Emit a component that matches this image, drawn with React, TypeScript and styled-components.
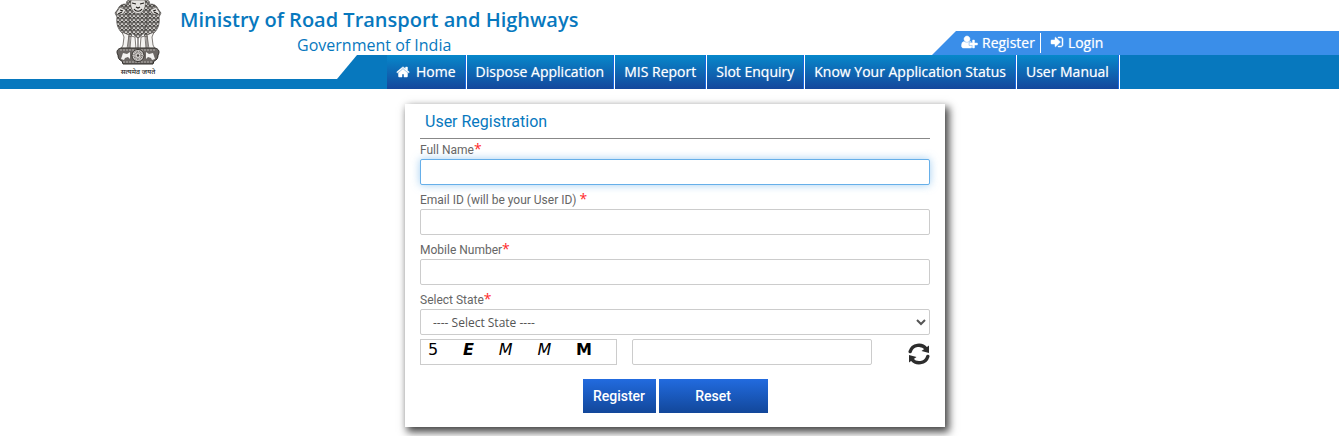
import React from 'react';
import styled, { createGlobalStyle } from 'styled-components';

const GlobalStyle = createGlobalStyle`
  *, *::before, *::after { box-sizing: border-box; }
  body { margin: 0; background: #fff; font-family: 'Open Sans', 'Noto Sans', sans-serif; }
`;

const blue = '#0778be';

const Header = styled.header`
  display: grid;
  grid-template-columns: 337px minmax(0, 1fr);
  grid-template-rows: 55px 24px 10px;
`;

const EmblemLink = styled.a`
  grid-area: 1 / 1 / 3 / 2;
  justify-self: start;
  margin-left: 114px;
  height: 77px;
`;

const Brand = styled.div`
  grid-area: 1 / 1 / 2 / 3;
  justify-self: start;
  margin-left: 180px;
  padding-top: 5px;
  color: ${blue};
`;

const BrandTitle = styled.h1`
  margin: 0;
  font-size: 20px;
  font-weight: 600;
  line-height: 30px;
`;

const BrandSubtitle = styled.p`
  margin: 0;
  padding-right: 10px;
  font-size: 16px;
  line-height: 20px;
  text-align: center;
`;

const Strip = styled.div`
  grid-area: 3 / 1 / 4 / 2;
  background: ${blue};
`;

const AccountBar = styled.nav`
  grid-area: 1 / 2 / 2 / 3;
  align-self: end;
  display: flex;
  align-items: center;
  height: 24px;
  margin-left: 595px;
  padding-left: 24px;
  background: #3a8ee9;
  clip-path: polygon(24px 0, 100% 0, 100% 100%, 0 100%);
`;

const AccountLink = styled.a<{ $divided?: boolean }>`
  display: flex;
  align-items: center;
  gap: 4px;
  height: 20px;
  padding: 0 5px 2px;
  padding-left: ${p => (p.$divided ? 9 : 5)}px;
  border-left: ${p => (p.$divided ? '1px solid #fff' : '0')};
  color: #fff;
  font-size: 14px;
  font-weight: 500;
  text-decoration: none;
  text-shadow: 0 0 1px rgba(255, 255, 255, 0.6);
  white-space: nowrap;
`;

const MainNav = styled.nav`
  grid-area: 2 / 2 / 4 / 3;
  padding-left: 50px;
  background: ${blue};
  clip-path: polygon(20px 0, 100% 0, 100% 100%, 0 100%, 0 24px);
`;

const NavList = styled.ul`
  display: flex;
  height: 34px;
  margin: 0;
  padding: 0;
  list-style: none;
`;

const NavLink = styled.a`
  display: flex;
  align-items: center;
  gap: 6px;
  height: 34px;
  padding: 0 10px 1px 9px;
  border-right: 1px solid #fff;
  background: linear-gradient(#0788cb, #15479c);
  box-shadow: inset -1px 0 #1668e0;
  color: #fff;
  font-size: 14px;
  font-weight: 500;
  text-decoration: none;
  text-shadow: 0 0 1px rgba(255, 255, 255, 0.6);
  white-space: nowrap;
`;

const Main = styled.main`
  display: flex;
  justify-content: center;
  padding: 15px 0 9px 11px;
`;

const Card = styled.form`
  width: 540px;
  max-width: 100%;
  padding: 0 15px 14px;
  background: #fff;
  box-shadow: 3px 4px 8px 1px #444;
  color: #666;
  font-family: Roboto, sans-serif;
`;

const CardTitle = styled.h2`
  margin: 0;
  padding: 2px 0 0 5px;
  border-bottom: 1px solid #888;
  color: ${blue};
  font-size: 16px;
  font-weight: 400;
  line-height: 32px;
`;

const Field = styled.div`
  margin-bottom: 4px;
`;

const Label = styled.label`
  display: block;
  height: 20px;
  font-size: 12px;
  line-height: 22px;
`;

const Required = styled.span`
  color: #ff2a2a;
  font-family: 'Open Sans', sans-serif;
  font-size: 14px;
  line-height: 16px;
`;

const TextInput = styled.input`
  display: block;
  width: 100%;
  height: 26px;
  padding: 0 12px;
  border: 1px solid #ccc;
  border-radius: 2px;
  outline: 0;
  background: #fff;
  color: #555;
  font: 12px 'Open Sans', sans-serif;

  &:focus {
    border-color: #66afe9;
    box-shadow: 0 0 8px rgba(102, 175, 233, 0.6);
  }
`;

const StateSelect = styled.select`
  display: block;
  width: 100%;
  height: 26px;
  padding: 0 8px;
  border: 1px solid #ccc;
  border-radius: 2px;
  background: #fff;
  color: #555;
  font: 12px 'Open Sans', sans-serif;
`;

const CaptchaRow = styled.div`
  display: flex;
  gap: 15px;
`;

const Captcha = styled.div`
  display: flex;
  flex: 0 1 197px;
  justify-content: space-between;
  height: 26px;
  padding: 0 24px 0 7px;
  border: 1px solid #ccc;
  color: #000;
  font-family: 'DejaVu Sans', sans-serif;
  font-size: 16px;
  line-height: 20px;
`;

const Glyph = styled.span<{ $bold?: boolean; $italic?: boolean }>`
  font-weight: ${p => (p.$bold ? 700 : 400)};
  font-style: ${p => (p.$italic ? 'italic' : 'normal')};
`;

const CaptchaAnswer = styled(TextInput)`
  flex: 0 1 240px;
  width: 240px;
`;

const RefreshButton = styled.button`
  display: flex;
  margin-left: auto;
  padding: 4px 0 0;
  border: 0;
  background: none;
  color: #2d2d2d;
`;

const Actions = styled.div`
  display: flex;
  justify-content: center;
  gap: 3px;
  padding-top: 14px;
`;

const ActionButton = styled.button<{ $wide?: boolean }>`
  width: ${p => (p.$wide ? 109 : 73)}px;
  height: 34px;
  padding: 0;
  border: 0;
  background: linear-gradient(#226bdf, #12479a);
  color: #fff;
  font: 500 14px Roboto, sans-serif;
`;

const HomeIcon = () => (
  <svg width="14" height="14" viewBox="0 0 1792 1792" fill="currentColor" stroke="currentColor" strokeWidth="60" aria-hidden="true">
    <path d="M1472 992v480q0 26-19 45t-45 19h-384v-384h-256v384h-384q-26 0-45-19t-19-45v-480q0-1 .5-3t.5-3l575-474 575 474q1 2 1 6zm223-69l-62 74q-8 9-21 11h-3q-13 0-21-7l-692-577-692 577q-12 8-24 7-13-2-21-11l-62-74q-8-10-7-23.5t11-21.5l719-599q32-26 76-26t76 26l244 204v-195q0-14 9-23t23-9h192q14 0 23 9t9 23v408l219 182q10 8 11 21.5t-7 23.5z" />
  </svg>
);

const UserPlusIcon = () => (
  <svg width="17" height="14" viewBox="0 0 2048 1792" fill="currentColor" stroke="currentColor" strokeWidth="60" aria-hidden="true">
    <path d="M704 896q-159 0-271.5-112.5t-112.5-271.5 112.5-271.5 271.5-112.5 271.5 112.5 112.5 271.5-112.5 271.5-271.5 112.5zm960 128h352q13 0 22.5 9.5t9.5 22.5v192q0 13-9.5 22.5t-22.5 9.5h-352v352q0 13-9.5 22.5t-22.5 9.5h-192q-13 0-22.5-9.5t-9.5-22.5v-352h-352q-13 0-22.5-9.5t-9.5-22.5v-192q0-13 9.5-22.5t22.5-9.5h352v-352q0-13 9.5-22.5t22.5-9.5h192q13 0 22.5 9.5t9.5 22.5v352zm-736 224q0 52 38 90t90 38h256v238q-68 50-171 50h-874q-121 0-194-69t-73-190q0-53 3.5-103.5t14-109 26.5-108.5 43-97.5 62-81 85.5-53.5 111.5-20q19 0 39 17 79 61 154.5 91.5t164.5 30.5 164.5-30.5 154.5-91.5q20-17 39-17 132 0 217 96h-223q-52 0-90 38t-38 90v192z" />
  </svg>
);

const SignInIcon = () => (
  <svg width="14" height="14" viewBox="0 0 1792 1792" fill="currentColor" stroke="currentColor" strokeWidth="60" aria-hidden="true">
    <path d="M1312 896q0 26-19 45l-544 544q-19 19-45 19t-45-19-19-45v-288h-448q-26 0-45-19t-19-45v-384q0-26 19-45t45-19h448v-288q0-26 19-45t45-19 45 19l544 544q19 19 19 45zm352-352v704q0 119-84.5 203.5t-203.5 84.5h-320q-13 0-22.5-9.5t-9.5-22.5q0-4-1-20t-.5-26.5 3-23.5 10-19.5 20.5-6.5h320q66 0 113-47t47-113v-704q0-66-47-113t-113-47h-312l-11.5-1-11.5-3-8-5.5-7-9-2-13.5q0-4-1-20t-.5-26.5 3-23.5 10-19.5 20.5-6.5h320q119 0 203.5 84.5t84.5 203.5z" />
  </svg>
);

const RefreshIcon = () => (
  <svg width="22" height="22" viewBox="0 0 22 22" fill="none" stroke="currentColor" strokeWidth="3.4" strokeLinecap="round" aria-hidden="true">
    <path d="M2.200 8.500C4.500 1 14 .5 18 5.500M19.800 13.500C17.500 21 8 21.500 4 16.500" />
    <path d="M21 2.500V10L13.500 8zM1 19.500V12L8.500 14z" fill="currentColor" stroke="none" />
  </svg>
);

const Emblem = () => (
  <svg width="48" height="77" viewBox="0 0 48 77" role="img" aria-label="State Emblem of India">
    <defs>
      <pattern id="fur" width="4" height="4" patternUnits="userSpaceOnUse">
        <rect width="4" height="4" fill="#6d6a67" />
        <path d="M0 0l2 2.500L4 0M-2 2l2 2.500L2 2M2 2l2 2.500L6 2" fill="none" stroke="#d6d3d0" strokeWidth="1" />
        <path d="M0 1l2 2.500L4 1" fill="none" stroke="#2a2826" strokeWidth=".8" />
      </pattern>
    </defs>
    <g fill="url(#fur)" stroke="#4b4845" strokeWidth=".7">
      <path d="M15 6C11 2 5 5 4 9L1 13l2 4c-1 7 1 12 5 16l9 4 7-20z" />
      <path d="M33 6c4-4 10-1 11 3l3 4-2 4c1 7-1 12-5 16l-9 4-7-20z" />
      <path d="M13 1c-2 7-1 11 2 14 0 9 2 20 9 23 7-3 9-14 9-23 3-3 4-7 2-14-6-2-16-2-22 0z" />
    </g>
    <g fill="#e4e2df" stroke="#4b4845" strokeWidth=".6">
      <path d="M17 0c-1 5 0 9 3 12 2 2 6 2 8 0 3-3 4-7 3-12z" />
      <path d="M6 7l-4 6 2 2 5-1 3-4zM42 7l4 6-2 2-5-1-3-4z" />
    </g>
    <g fill="none" stroke="#24211e" strokeWidth="1.200">
      <path d="M18 3l4 1M30 3l-4 1M22 7l2 1 2-1M20 9c2 3 6 3 8 0M6 10l3 1M42 10l-3 1M4 14l4-2M44 14l-4-2" />
    </g>
    <g fill="#f3f2f0" stroke="#5f5b57" strokeWidth=".8">
      <path d="M8 32l2 5-1 8-2 4h6l2-14zM17 36l-1 13h6l-1-12zM27 37l-1 12h6l-1-13zM40 32l-2 5 1 8 2 4h-6l-2-14z" />
    </g>
    <path d="M15 36v12M24 38v11M33 36v12" stroke="#6d6966" strokeWidth="1.300" />
    <path d="M7 48h34c4 1 5 4 3 7 0 3-1 5-4 6l-1 3H9l-1-3c-3-1-4-3-4-6-2-3-1-6 3-7z" fill="#6b6764" stroke="#2d2a27" />
    <path d="M6 50h36M9 62h30" stroke="#c9c5c1" strokeWidth=".8" strokeDasharray="2 1" />
    <circle cx="24" cy="55.500" r="6" fill="#dcd9d6" stroke="#33302c" />
    <circle cx="24" cy="55.500" r="3.500" fill="none" stroke="#6d6966" strokeWidth="2.500" strokeDasharray=".7 .7" />
    <circle cx="24" cy="55.500" r="1.200" fill="#44413e" />
    <path d="M7 59l2-6 4 1 3-2v7l-2-2-3 1-1 2zM41 59l-2-6-4 1-3-2v7l2-2 3 1 1 2z" fill="#f3f2f0" />
    <text x="24" y="74" textAnchor="middle" fontSize="7" fontWeight="500" fontFamily="'Noto Sans', 'Noto Sans Devanagari', sans-serif" fill="#222">
      सत्यमेव जयते
    </text>
  </svg>
);

const navItems = ['Dispose Application', 'MIS Report', 'Slot Enquiry', 'Know Your Application Status', 'User Manual'];

export default function App() {
  return (
    <>
      <GlobalStyle />
      <Header>
        <EmblemLink href="#"><Emblem /></EmblemLink>
        <Brand>
          <BrandTitle>Ministry of Road Transport and Highways</BrandTitle>
          <BrandSubtitle>Government of India</BrandSubtitle>
        </Brand>
        <AccountBar aria-label="Account">
          <AccountLink href="#register"><UserPlusIcon />Register</AccountLink>
          <AccountLink href="#login" $divided><SignInIcon />Login</AccountLink>
        </AccountBar>
        <Strip />
        <MainNav aria-label="Main">
          <NavList>
            <li><NavLink href="#home"><HomeIcon />Home</NavLink></li>
            {navItems.map(item => (
              <li key={item}><NavLink href="#">{item}</NavLink></li>
            ))}
          </NavList>
        </MainNav>
      </Header>
      <Main>
        <Card onSubmit={e => e.preventDefault()}>
          <CardTitle>User Registration</CardTitle>
          <Field>
            <Label htmlFor="name">Full Name<Required>*</Required></Label>
            <TextInput id="name" type="text" autoFocus />
          </Field>
          <Field>
            <Label htmlFor="email">Email ID (will be your User ID) <Required>*</Required></Label>
            <TextInput id="email" type="text" />
          </Field>
          <Field>
            <Label htmlFor="mobile">Mobile Number<Required>*</Required></Label>
            <TextInput id="mobile" type="tel" />
          </Field>
          <Field>
            <Label htmlFor="state">Select State<Required>*</Required></Label>
            <StateSelect id="state"><option>---- Select State ----</option></StateSelect>
          </Field>
          <CaptchaRow>
            <Captcha>
              <Glyph>5</Glyph>
              <Glyph $bold $italic>E</Glyph>
              <Glyph $italic>M</Glyph>
              <Glyph $italic>M</Glyph>
              <Glyph $bold>M</Glyph>
            </Captcha>
            <CaptchaAnswer type="text" aria-label="Captcha text" />
            <RefreshButton type="button" aria-label="Refresh captcha"><RefreshIcon /></RefreshButton>
          </CaptchaRow>
          <Actions>
            <ActionButton type="submit">Register</ActionButton>
            <ActionButton type="reset" $wide>Reset</ActionButton>
          </Actions>
        </Card>
      </Main>
    </>
  );
}
